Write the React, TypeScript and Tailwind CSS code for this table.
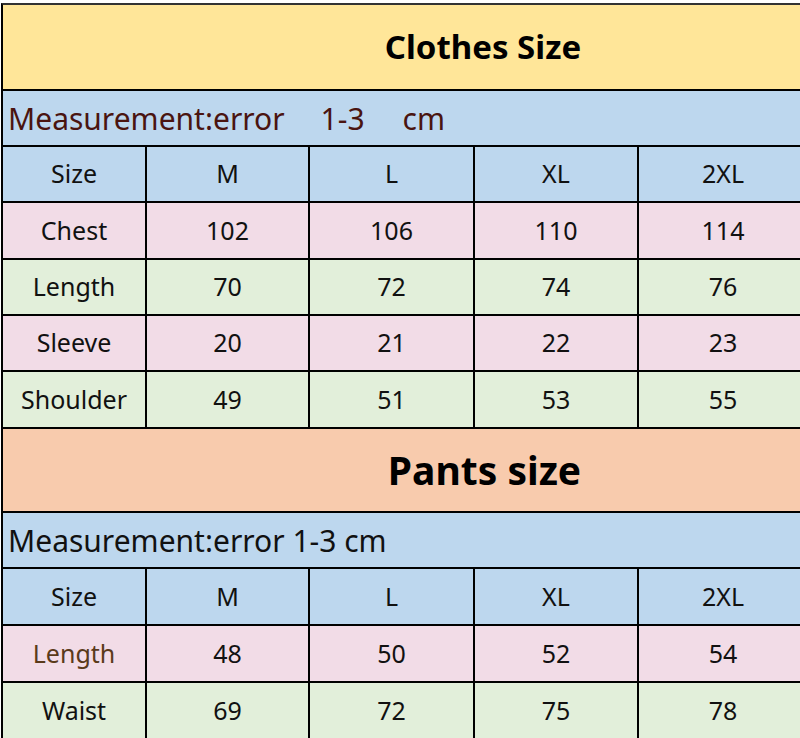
import React from 'react';

const cols = ['Size', 'M', 'L', 'XL', '2XL'];

const clothesRows = [
  { label: 'Chest', values: ['102', '106', '110', '114'], bg: 'bg-[#f2dce7]', h: 'h-[57px]' },
  { label: 'Length', values: ['70', '72', '74', '76'], bg: 'bg-[#e2efda]', h: 'h-[56px]' },
  { label: 'Sleeve', values: ['20', '21', '22', '23'], bg: 'bg-[#f2dce7]', h: 'h-[56px]' },
  { label: 'Shoulder', values: ['49', '51', '53', '55'], bg: 'bg-[#e2efda]', h: 'h-[57px]' },
];

const pantsRows = [
  { label: 'Length', values: ['48', '50', '52', '54'], bg: 'bg-[#f2dce7]', h: 'h-[57px]', labelColor: 'text-[#5a3a1a]' },
  { label: 'Waist', values: ['69', '72', '75', '78'], bg: 'bg-[#e2efda]', h: 'h-[57px]' },
];

const gridCols = 'grid grid-cols-[144px_163px_165px_164px_1fr]';

function Row({ cells, bg, h, labelColor }: { cells: string[]; bg: string; h: string; labelColor?: string }) {
  return (
    <div className={`${gridCols} ${h} border-b-2 border-black ${bg}`}>
      {cells.map((c, i) => (
        <div
          key={i}
          className={`flex items-center justify-center text-[25px] ${i < 4 ? 'border-r-2 border-black' : ''} ${i === 0 && labelColor ? labelColor : 'text-[#111]'}`}
        >
          {c}
        </div>
      ))}
    </div>
  );
}

export default function App() {
  return (
    <div className="w-[800px] h-[738px] overflow-hidden bg-white pt-[3px] pl-[1px]" style={{ fontFamily: '"Noto Sans", "Open Sans", sans-serif' }}>
      <div className="w-[806px] border-t-2 border-l-2 border-black border-t-[#333]">
        {/* Clothes */}
        <div className="h-[86px] flex items-center justify-center pl-[156px] border-b-2 border-black bg-[#ffe699]">
          <span className="text-[33px] font-bold text-black">Clothes Size</span>
        </div>
        <div className="h-[56px] flex items-center pl-[5px] border-b-2 border-black bg-[#bdd7ee] text-[30px] text-[#4a1410]">
          <span>Measurement:error</span>
          <span className="ml-[36px]">1-3</span>
          <span className="ml-[38px]">cm</span>
        </div>
        <Row cells={cols} bg="bg-[#bdd7ee]" h="h-[56px]" />
        {clothesRows.map((r) => (
          <Row key={r.label} cells={[r.label, ...r.values]} bg={r.bg} h={r.h} />
        ))}

        {/* Pants */}
        <div className="h-[84px] flex items-center justify-center pl-[159px] border-b-2 border-black bg-[#f8cbad]">
          <span className="text-[39px] font-bold text-black">Pants size</span>
        </div>
        <div className="h-[56px] flex items-center pl-[5px] border-b-2 border-black bg-[#bdd7ee]">
          <span className="text-[30px] text-[#111]">Measurement:error 1-3 cm</span>
        </div>
        <Row cells={cols} bg="bg-[#bdd7ee]" h="h-[57px]" />
        {pantsRows.map((r) => (
          <Row key={r.label + 'p'} cells={[r.label, ...r.values]} bg={r.bg} h={r.h} labelColor={r.labelColor} />
        ))}
      </div>
    </div>
  );
}
